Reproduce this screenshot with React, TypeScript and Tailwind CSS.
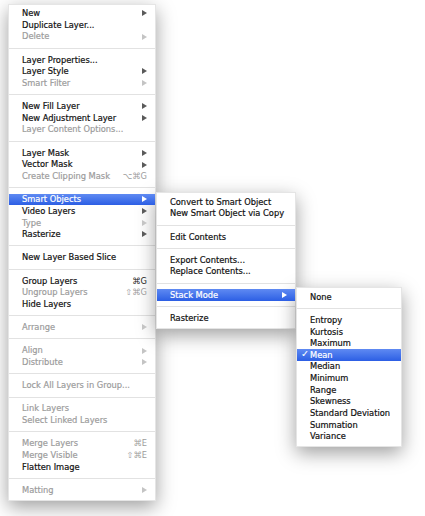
import React from 'react'

type Item = {
  label: string
  disabled?: boolean
  arrow?: boolean
  shortcut?: string
  active?: boolean
  checked?: boolean
}

type Group = Item[]

const layerMenu: Group[] = [
  [
    { label: 'New', arrow: true },
    { label: 'Duplicate Layer...' },
    { label: 'Delete', disabled: true, arrow: true },
  ],
  [
    { label: 'Layer Properties...' },
    { label: 'Layer Style', arrow: true },
    { label: 'Smart Filter', disabled: true, arrow: true },
  ],
  [
    { label: 'New Fill Layer', arrow: true },
    { label: 'New Adjustment Layer', arrow: true },
    { label: 'Layer Content Options...', disabled: true },
  ],
  [
    { label: 'Layer Mask', arrow: true },
    { label: 'Vector Mask', arrow: true },
    { label: 'Create Clipping Mask', disabled: true, shortcut: '⌥⌘G' },
  ],
  [
    { label: 'Smart Objects', arrow: true, active: true },
    { label: 'Video Layers', arrow: true },
    { label: 'Type', disabled: true, arrow: true },
    { label: 'Rasterize', arrow: true },
  ],
  [{ label: 'New Layer Based Slice' }],
  [
    { label: 'Group Layers', shortcut: '⌘G' },
    { label: 'Ungroup Layers', disabled: true, shortcut: '⇧⌘G' },
    { label: 'Hide Layers' },
  ],
  [{ label: 'Arrange', disabled: true, arrow: true }],
  [
    { label: 'Align', disabled: true, arrow: true },
    { label: 'Distribute', disabled: true, arrow: true },
  ],
  [{ label: 'Lock All Layers in Group...', disabled: true }],
  [
    { label: 'Link Layers', disabled: true },
    { label: 'Select Linked Layers', disabled: true },
  ],
  [
    { label: 'Merge Layers', disabled: true, shortcut: '⌘E' },
    { label: 'Merge Visible', disabled: true, shortcut: '⇧⌘E' },
    { label: 'Flatten Image' },
  ],
  [{ label: 'Matting', disabled: true, arrow: true }],
]

const smartMenu: Group[] = [
  [{ label: 'Convert to Smart Object' }, { label: 'New Smart Object via Copy' }],
  [{ label: 'Edit Contents' }],
  [{ label: 'Export Contents...' }, { label: 'Replace Contents...' }],
  [{ label: 'Stack Mode', arrow: true, active: true }],
  [{ label: 'Rasterize' }],
]

const stackMenu: Group[] = [
  [{ label: 'None' }],
  [
    { label: 'Entropy' },
    { label: 'Kurtosis' },
    { label: 'Maximum' },
    { label: 'Mean', active: true, checked: true },
    { label: 'Median' },
    { label: 'Minimum' },
    { label: 'Range' },
    { label: 'Skewness' },
    { label: 'Standard Deviation' },
    { label: 'Summation' },
    { label: 'Variance' },
  ],
]

function Arrow({ color }: { color: string }) {
  return (
    <svg width="5" height="6" viewBox="0 0 5 6" className="shrink-0">
      <polygon points="0,0 5,3 0,6" fill={color} />
    </svg>
  )
}

function Row({ item }: { item: Item }) {
  const text = item.active ? 'text-white' : item.disabled ? 'text-[#9c9c9c]' : 'text-[#111]'
  const arrowColor = item.active ? '#ffffff' : item.disabled ? '#c4c4c4' : '#5a5a5a'
  return (
    <div
      className={
        'relative flex h-[11.65px] items-center pl-[13px] pr-[8px] ' +
        (item.active ? 'bg-gradient-to-b from-[#5f8af2] to-[#2c5ee4] ' : '') +
        text
      }
    >
      {item.checked && (
        <span className="absolute left-[4px] top-[-1px] text-[9.5px] leading-[12px] text-white">✓</span>
      )}
      <span className="flex-1 whitespace-nowrap leading-none [-webkit-text-stroke:0.2px_currentColor]">
        {item.label}
      </span>
      {item.shortcut && (
        <span className={'whitespace-nowrap leading-none ' + (item.disabled ? 'text-[#9c9c9c]' : 'text-[#222]')}>
          {item.shortcut}
        </span>
      )}
      {item.arrow && <Arrow color={arrowColor} />}
    </div>
  )
}

function Menu({ groups, className }: { groups: Group[]; className: string }) {
  return (
    <div
      className={
        'shrink-0 bg-white pt-[3px] pb-[4px] border border-black/10 shadow-[0_6px_18px_rgba(0,0,0,0.38)] ' +
        className
      }
    >
      {groups.map((g, gi) => (
        <div key={gi}>
          {gi > 0 && (
            <div className="flex h-[11.6px] items-center">
              <div className="h-px w-full bg-[#e2e2e2]" />
            </div>
          )}
          {g.map((item) => (
            <Row key={item.label} item={item} />
          ))}
        </div>
      ))}
    </div>
  )
}

export default function App() {
  return (
    <div
      className="flex h-[516px] w-[425px] items-start overflow-hidden bg-white text-[8.3px]"
      style={{ fontFamily: '"DejaVu Sans", "Lucida Grande", Verdana, sans-serif' }}
    >
      <Menu groups={layerMenu} className="ml-[8px] mt-[3.5px] w-[148px]" />
      <Menu groups={smartMenu} className="mt-[192px] w-[140px]" />
      <Menu groups={stackMenu} className="mt-[287px] w-[106px]" />
    </div>
  )
}
